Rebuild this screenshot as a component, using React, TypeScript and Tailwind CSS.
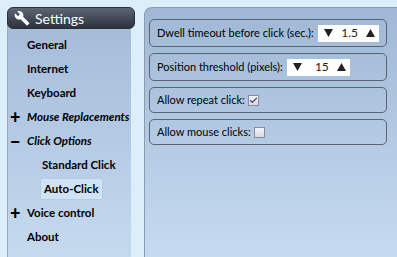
import { Check } from 'lucide-react';

const font = { fontFamily: 'Lato, "Comic Sans MS", sans-serif' };

function Wrench() {
  return (
    <svg width="16" height="16" viewBox="0 0 24 24" fill="white">
      <path d="M22.7 19.3l-9.1-9.1c.9-2.3.4-5-1.5-6.9-2-2-5-2.4-7.4-1.3l4.3 4.3-3 3-4.4-4.3C.4 7.4.9 10.4 2.9 12.4c1.9 1.9 4.6 2.4 6.9 1.5l9.1 9.1c.4.4 1 .4 1.4 0l2.3-2.3c.5-.4.5-1.1.1-1.4z" />
    </svg>
  );
}

function Tri({ up }: { up?: boolean }) {
  return (
    <svg width="9" height="8" viewBox="0 0 9 8" fill="#222">
      {up ? <polygon points="4.5,0 9,8 0,8" /> : <polygon points="0,0 9,0 4.5,8" />}
    </svg>
  );
}

function Spinner({ value, width }: { value: string; width: string }) {
  return (
    <div className={`flex items-center justify-between bg-white h-[17px] pl-[6px] pr-[4px] ${width}`}>
      <Tri />
      <span className="flex items-center gap-[8px]">
        <span className="text-[12px] text-[#222]">{value}</span>
        <Tri up />
      </span>
    </div>
  );
}

function Row({ children, h }: { children: React.ReactNode; h: string }) {
  return (
    <div className={`flex items-center whitespace-nowrap border border-[#5c6272] rounded-[5px] px-[7px] ${h}`}>
      {children}
    </div>
  );
}

export default function App() {
  const items = [
    { label: 'General', indent: 'pl-[20px]' },
    { label: 'Internet', indent: 'pl-[20px]' },
    { label: 'Keyboard', indent: 'pl-[20px]' },
    { label: 'Mouse Replacements', indent: 'pl-[3px]', sign: '+', italic: true },
    { label: 'Click Options', indent: 'pl-[3px]', sign: '−', italic: true },
    { label: 'Standard Click', indent: 'pl-[35px]' },
    { label: 'Auto-Click', indent: 'pl-[35px]', active: true },
    { label: 'Voice control', indent: 'pl-[3px]', sign: '+' },
    { label: 'About', indent: 'pl-[20px]' },
  ];

  return (
    <div className="w-[397px] h-[257px] overflow-hidden bg-[#ddeefb] flex pt-[7px] pl-[7px] text-black" style={font}>
      <div className="w-[128px] shrink-0 flex flex-col relative">
        <div className="absolute left-0 top-[12px] w-[124px] bottom-0 bg-gradient-to-b from-[#a4bbd8] to-[#c6daef] border-l border-[#9aaabd]" />
        <div className="relative h-[22px] rounded-[6px] bg-gradient-to-b from-[#5d6773] to-[#2c333d] flex items-center gap-[5px] pl-[6px] text-white text-[14px] border border-[#2a3038]">
          <Wrench />
          <span>Settings</span>
        </div>
        <div className="relative flex flex-col pt-[4px]">
          {items.map((it) => (
            <div key={it.label} className={`h-[24px] flex items-center whitespace-nowrap ${it.indent}`}>
              {it.sign && <span className="w-[17px] text-[18px] font-black leading-none">{it.sign}</span>}
              {it.active ? (
                <span className="-ml-[2px] px-[3px] h-[22px] flex items-center bg-[#d0e2f6] border border-[#b6cbe4] text-[11.5px] font-bold">
                  {it.label}
                </span>
              ) : (
                <span className={`text-[11.5px] font-bold ${it.italic ? 'italic' : ''}`}>{it.label}</span>
              )}
            </div>
          ))}
        </div>
      </div>
      <div className="ml-[9px] flex-1 min-w-0 rounded-tl-[8px] border-l border-t border-[#8c9bb0] bg-gradient-to-b from-[#a0b8d6] to-[#c6dbf0] pt-[11px] pl-[4px] pr-[10px] flex flex-col gap-[6px]">
        <Row h="h-[28px]">
          <span className="text-[11px] mr-[4px]">Dwell timeout before click (sec.):</span>
          <Spinner value="1.5" width="w-[66px]" />
        </Row>
        <Row h="h-[28px]">
          <span className="text-[11px] mr-[4px]">Position threshold (pixels):</span>
          <Spinner value="15" width="w-[63px]" />
        </Row>
        <Row h="h-[26px]">
          <span className="text-[11px] mr-[3px]">Allow repeat click:</span>
          <span className="w-[11px] h-[11px] border border-[#8a8a9a] bg-gradient-to-b from-[#f4f4f8] to-[#d8d8e0] flex items-center justify-center">
            <Check size={9} strokeWidth={3} className="text-[#3a3a8a]" />
          </span>
        </Row>
        <Row h="h-[26px]">
          <span className="text-[11px] mr-[3px]">Allow mouse clicks:</span>
          <span className="w-[11px] h-[11px] border border-[#8a8a9a] bg-gradient-to-b from-[#f4f4f8] to-[#d8d8e0]" />
        </Row>
      </div>
    </div>
  );
}
